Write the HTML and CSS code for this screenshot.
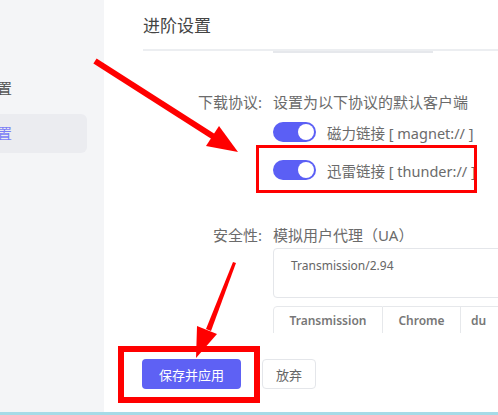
FILE: index.html
```html
<!DOCTYPE html>
<html lang="zh-CN">
  <head>
    <meta charset="UTF-8" />
    <meta name="viewport" content="width=device-width, initial-scale=1.0" />
    <title>进阶设置</title>
    <link rel="stylesheet" href="styles.css">
  </head>

  <body>
    <div class="layout">
      <aside class="sidebar">
        <ul class="nav">
          <li class="nav-item">基本设置</li>
          <li class="nav-item active">进阶设置</li>
        </ul>
      </aside>

      <main class="main">
        <div class="page-header">
          <h2>进阶设置</h2>
        </div>
        <div class="header-bar"></div>

        <form class="settings">
          <div class="form-row">
            <label class="form-label">下载协议:</label>
            <div class="form-field">
              <div class="field-title">设置为以下协议的默认客户端</div>
              <div class="option">
                <span class="switch on"></span>
                <span>磁力链接 [ magnet:// ]</span>
              </div>
              <div class="option">
                <span class="switch on"></span>
                <span>迅雷链接 [ thunder:// ]</span>
              </div>
            </div>
          </div>

          <div class="form-row security">
            <label class="form-label">安全性:</label>
            <div class="form-field">
              <div class="field-title">模拟用户代理（UA）</div>
              <div class="ua-box">Transmission/2.94</div>
              <div class="ua-tabs">
                <span class="ua-tab">Transmission</span>
                <span class="ua-tab">Chrome</span>
                <span class="ua-tab">du</span>
              </div>
            </div>
          </div>

          <div class="actions">
            <button type="button" class="btn btn-primary">保存并应用</button>
            <button type="button" class="btn btn-plain">放弃</button>
          </div>
        </form>
      </main>
    </div>
    <div class="bottom-strip"></div>

    <!-- annotation marks drawn over the page -->
    <svg class="marks" width="498" height="415" viewBox="0 0 498 415">
      <line x1="95" y1="61" x2="214" y2="137" stroke="#ff0000" stroke-width="6" />
      <polygon points="206,146 219,126 238,152" fill="#ff0000" />
      <rect x="257.5" y="146.5" width="218" height="45" fill="none" stroke="#ff0000" stroke-width="3" />

      <polygon points="233,262 236,263 211,331 206,329" fill="#ff0000" />
      <polygon points="217,334 197,326 196,358" fill="#ff0000" />
      <rect x="121" y="349" width="136" height="51" fill="none" stroke="#ff0000" stroke-width="6" />
    </svg>
  </body>
</html>
```

FILE: styles.css
```css
* {
  box-sizing: border-box;
}

body {
  margin: 0;
  width: 498px;
  height: 415px;
  overflow: hidden;
  position: relative;
  display: flex;
  flex-direction: column;
  background: #fff;
  font-family: "Noto Sans", "Noto Sans CJK SC", sans-serif;
  color: #333;
}

.layout {
  flex: 1;
  display: flex;
  overflow: hidden;
}

.sidebar {
  width: 104px;
  flex-shrink: 0;
  background-color: #f4f5f7;
  overflow: hidden;
}

.nav {
  list-style: none;
  margin: 0 0 0 -62px;
  padding: 69px 0 0;
  display: flex;
  flex-direction: column;
  gap: 6px;
}

.nav-item {
  width: 149px;
  height: 39px;
  line-height: 39px;
  padding: 0 14px;
  font-size: 15px;
  color: #555;
  border-radius: 6px;
}

.nav-item.active {
  background-color: #ebecf0;
  color: #7b7ef6;
}

.main {
  flex: 1;
  padding-left: 39px;
  overflow: hidden;
}

.page-header {
  height: 51px;
  border-bottom: 2px solid #eceef1;
}

.page-header h2 {
  margin: 0;
  font-size: 17px;
  font-weight: normal;
  line-height: 51px;
  color: #444;
}

.header-bar {
  margin-left: 130px;
  width: 160px;
  height: 2px;
  background-color: #e6e8ec;
}

.settings {
  margin-top: 38px;
}

.form-row {
  display: grid;
  grid-template-columns: 119px 1fr;
  column-gap: 11px;
}

.form-label {
  text-align: right;
  font-size: 15px;
  line-height: 22px;
  color: #6b6b6b;
}

.field-title {
  font-size: 15px;
  line-height: 22px;
  color: #6b6b6b;
}

.option {
  display: flex;
  align-items: center;
  gap: 11px;
  height: 38px;
  font-size: 14.5px;
  color: #6b6b6b;
}

.option:first-of-type {
  margin-top: 1px;
}

.switch {
  position: relative;
  width: 43px;
  height: 20px;
  border-radius: 10px;
  background-color: #d0d3d9;
  flex-shrink: 0;
}

.switch.on {
  background-color: #5b5ff5;
}

.switch::after {
  content: "";
  position: absolute;
  top: 2px;
  left: 2px;
  width: 16px;
  height: 16px;
  border-radius: 50%;
  background: #fff;
}

.switch.on::after {
  left: 25px;
}

.security {
  margin-top: 35px;
}

.ua-box {
  margin-top: 2px;
  width: 300px;
  height: 50px;
  padding: 8px 17px;
  border: 1px solid #e4e6ea;
  border-radius: 4px;
  font-size: 12px;
  color: #666;
}

.ua-tabs {
  margin-top: 8px;
  height: 27px;
  overflow: hidden;
  display: flex;
}

.ua-tab {
  height: 40px;
  padding-top: 5px;
  border: 1px solid #e6e8eb;
  border-left: none;
  text-align: center;
  font-size: 12px;
  font-weight: 600;
  color: #777;
}

.ua-tab:first-child {
  width: 110px;
  border-left: 1px solid #e6e8eb;
  border-top-left-radius: 4px;
}

.ua-tab:nth-child(2) {
  width: 78px;
}

.ua-tab:nth-child(3) {
  width: 60px;
  text-align: left;
  padding-left: 10px;
}

.actions {
  margin-top: 26px;
  display: flex;
  gap: 21px;
  margin-left: -1px;
}

.btn {
  height: 30px;
  border-radius: 4px;
  font-family: inherit;
  font-size: 13px;
  cursor: pointer;
}

.btn-primary {
  width: 99px;
  border: none;
  background-color: #5e61f4;
  color: #fff;
}

.btn-plain {
  width: 54px;
  border: 1px solid #e4e6ea;
  background: #fff;
  color: #666;
}

.bottom-strip {
  height: 3px;
  background-color: #a6dbe7;
}

.marks {
  position: absolute;
  top: 0;
  left: 0;
  pointer-events: none;
}
```
